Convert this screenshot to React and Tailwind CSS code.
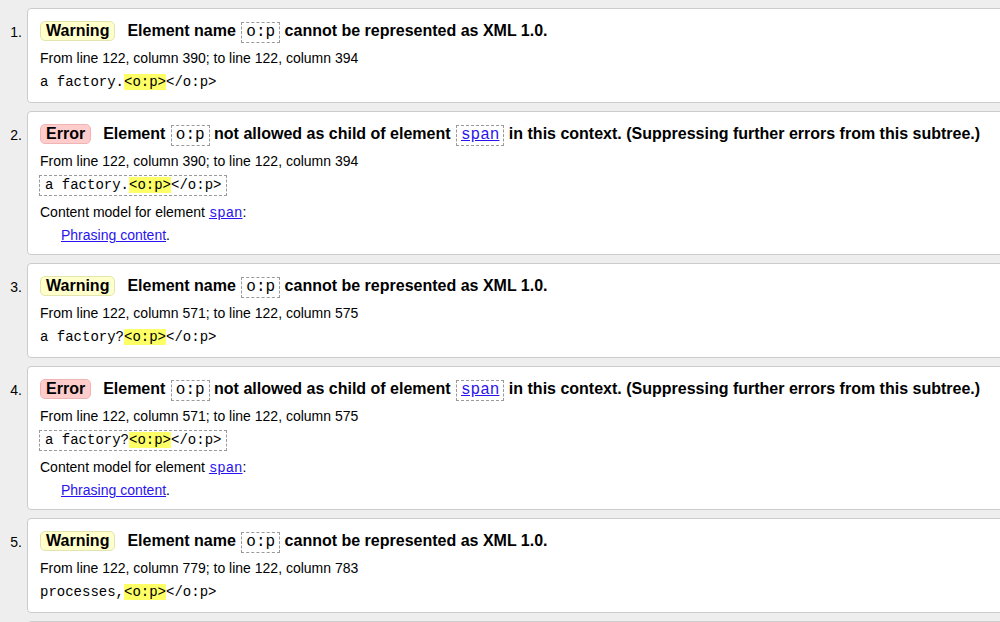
const MONO = "font-['Liberation_Mono','Courier_New',monospace]";

const MESSAGES = [
  { type: 'warning', from: '390', to: '394', text: 'a factory.' },
  { type: 'error', from: '390', to: '394', text: 'a factory.' },
  { type: 'warning', from: '571', to: '575', text: 'a factory?' },
  { type: 'error', from: '571', to: '575', text: 'a factory?' },
  { type: 'warning', from: '779', to: '783', text: 'processes,' },
  { type: 'error', from: '779', to: '783', text: 'processes,' },
];

function CodeBox({ children, link = false }) {
  return (
    <span
      className={`inline-block border border-dashed border-[#9a9a9a] px-[4px] leading-[19px] text-[16px] font-normal ml-[1px] ${MONO}`}
    >
      {link ? (
        <span className="text-[#2a14ee] underline">{children}</span>
      ) : (
        children
      )}
    </span>
  );
}

function Badge({ type }) {
  const isError = type === 'error';
  return (
    <span
      className={`inline-block h-[20px] leading-[18px] px-[5px] rounded-[5px] border text-[16px] font-bold ${
        isError ? 'bg-[#ffcccc] border-[#efb4b4]' : 'bg-[#ffffcc] border-[#e4e4ae]'
      }`}
    >
      {isError ? 'Error' : 'Warning'}
    </span>
  );
}

function Extract({ text }) {
  return (
    <>
      {text}
      <span className="bg-[#ffff66]">{'<o:p>'}</span>
      {'</o:p>'}
    </>
  );
}

function Message({ index, msg }) {
  const isError = msg.type === 'error';
  return (
    <li className="flex">
      {/* Number */}
      <span className="w-[27px] shrink-0 pr-[5px] pt-[14px] text-right text-[14px] leading-[20px]">
        {index}.
      </span>

      {/* Card */}
      <div className="w-[990px] shrink-0 bg-white border border-[#cccccc] rounded-[4px] px-[12px] pt-[9px] pb-[9px]">
        <div className="flex items-center h-[26px] whitespace-nowrap">
          <Badge type={msg.type} />
          <span className="ml-[12px] text-[16px] font-bold">
            {isError ? (
              <>
                Element <CodeBox>o:p</CodeBox> not allowed as child of element{' '}
                <CodeBox link>span</CodeBox> in this context. (Suppressing further errors from this subtree.)
              </>
            ) : (
              <>
                Element name <CodeBox>o:p</CodeBox> cannot be represented as XML 1.0.
              </>
            )}
          </span>
        </div>

        <p className="mt-[4px] text-[14px] leading-[20px]">
          From line 122, column {msg.from}; to line 122, column {msg.to}
        </p>

        {isError ? (
          <>
            <div
              className={`mt-[4px] w-fit -ml-[1px] border border-dashed border-[#9a9a9a] px-[5px] text-[14px] leading-[19px] ${MONO}`}
            >
              <Extract text={msg.text} />
            </div>
            <p className="mt-[6px] text-[14px] leading-[20px]">
              Content model for element{' '}
              <span className={`text-[#2a14ee] underline ${MONO}`}>span</span>:
            </p>
            <p className="mt-[2px] pl-[21px] text-[14px] leading-[20px]">
              <span className="text-[#2a14ee] underline">Phrasing content</span>.
            </p>
          </>
        ) : (
          <p className={`mt-[4px] text-[14px] leading-[21px] ${MONO}`}>
            <Extract text={msg.text} />
          </p>
        )}
      </div>
    </li>
  );
}

export default function App() {
  return (
    <div className="w-[1000px] h-[622px] overflow-hidden bg-[#eeeeee] text-black font-['Liberation_Sans',Arial,sans-serif]">
      <ol className="flex flex-col gap-[8px] pt-[8px]">
        {MESSAGES.map((msg, i) => (
          <Message key={i} index={i + 1} msg={msg} />
        ))}
      </ol>
    </div>
  );
}
